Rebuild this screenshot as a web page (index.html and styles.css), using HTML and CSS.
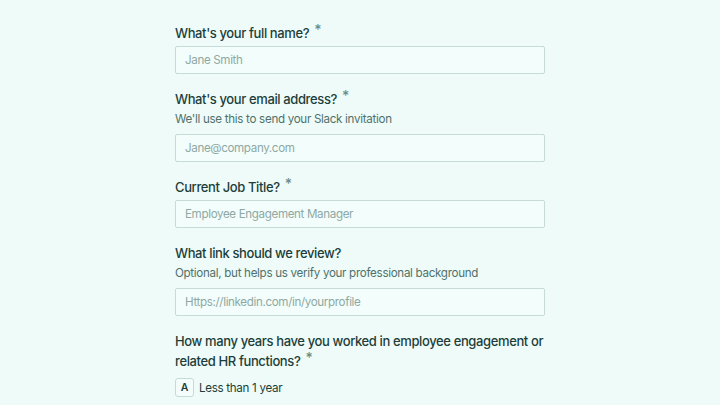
FILE: index.html
```
<!DOCTYPE html>
<html>
<head>
<meta charset="utf-8">
<link rel="stylesheet" href="styles.css">
</head>
<body>
<form class="form">
  <div class="field">
    <label class="label">What's your full name?<span class="req">*</span></label>
    <input class="input" type="text" placeholder="Jane Smith">
  </div>
  <div class="field">
    <label class="label">What's your email address?<span class="req">*</span></label>
    <p class="help">We'll use this to send your Slack invitation</p>
    <input class="input" type="text" placeholder="Jane@company.com">
  </div>
  <div class="field">
    <label class="label">Current Job Title?<span class="req">*</span></label>
    <input class="input" type="text" placeholder="Employee Engagement Manager">
  </div>
  <div class="field">
    <label class="label">What link should we review?</label>
    <p class="help">Optional, but helps us verify your professional background</p>
    <input class="input" type="text" placeholder="Https://linkedin.com/in/yourprofile">
  </div>
  <div class="field">
    <label class="label">How many years have you worked in employee engagement or related HR functions?<span class="req">*</span></label>
    <div class="option"><span class="key">A</span><span class="opt-text">Less than 1 year</span></div>
  </div>
</form>
</body>
</html>
```
FILE: styles.css
```
html, body {
  margin: 0;
  padding: 0;
  background: #effbf9;
  font-family: Inter, "Noto Sans", sans-serif;
  height: 405px;
  overflow: hidden;
}
.form {
  width: 370px;
  margin: 0 0 0 175px;
  padding-top: 23px;
  display: flex;
  flex-direction: column;
  gap: 15px;
}
.field {
  display: flex;
  flex-direction: column;
}
.label {
  font-size: 13px;
  font-weight: 500;
  line-height: 20px;
  color: #1c3e3a;
  letter-spacing: -0.38px;
}
.req {
  display: inline-block;
  vertical-align: top;
  line-height: 12px;
  color: #6a8d87;
  font-size: 14px;
  margin-left: 5px;
  margin-top: 1px;
}
.help {
  margin: 1px 0 0;
  font-size: 11.6px;
  line-height: 19px;
  color: #4e716b;
  letter-spacing: -0.3px;
}
.input {
  box-sizing: border-box;
  margin-top: 3px;
  height: 28px;
  width: 370px;
  border: 1px solid #c6dad6;
  border-radius: 2px;
  background: #f3fdfb;
  padding: 0 9px;
  font-family: Inter, "Noto Sans", sans-serif;
  font-size: 11.6px;
  letter-spacing: -0.35px;
  color: #1c3e3a;
  outline: none;
}
.help + .input {
  margin-top: 5px;
}
.input::placeholder {
  color: #8ea9a4;
}
.option {
  margin-top: 7px;
  display: flex;
  align-items: center;
  gap: 5px;
}
.key {
  box-sizing: border-box;
  width: 19px;
  height: 19px;
  border: 1px solid #c6dad6;
  border-radius: 3px;
  background: #f5fdfc;
  display: flex;
  align-items: center;
  justify-content: center;
  font-size: 10.5px;
  font-weight: 600;
  color: #1c3e3a;
}
.opt-text {
  font-size: 11.6px;
  letter-spacing: -0.3px;
  color: #1c3e3a;
}
```
